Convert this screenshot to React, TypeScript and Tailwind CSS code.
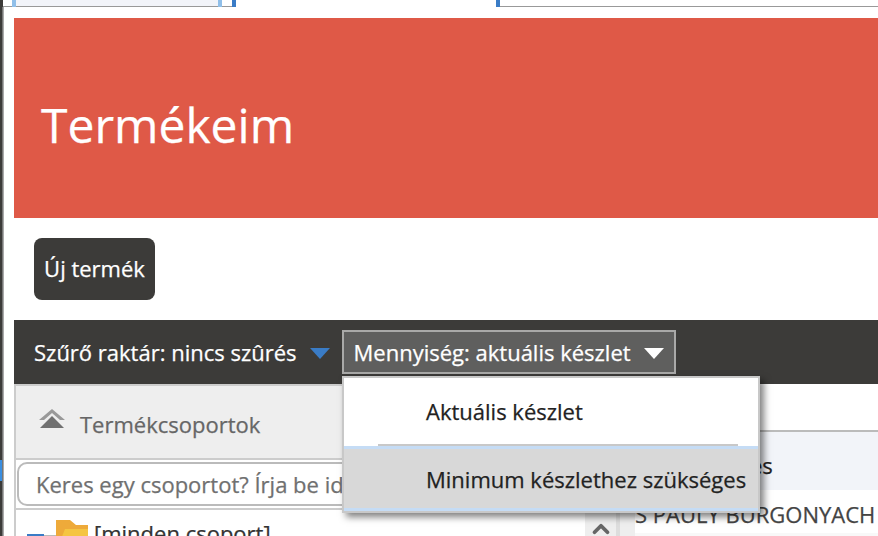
import { ChevronUp } from 'lucide-react'

const font = { fontFamily: '"Open Sans", sans-serif' }

function TopStrip() {
  return (
    <div className="flex h-[7px] shrink-0">
      <div className="w-[3px] bg-[#3c3b39]" />
      <div className="w-[9px] border-b border-[#999]" />
      <div className="w-[4px] bg-[#90bfe9]" />
      <div className="w-[202px] bg-[#f2f4f9] border-b border-[#999]" />
      <div className="w-[4px] bg-[#90bfe9]" />
      <div className="w-[10px] border-b border-[#999]" />
      <div className="w-[4px] bg-[#3a7cc6]" />
      <div className="w-[260px]" />
      <div className="w-[4px] bg-[#3a7cc6]" />
      <div className="flex-1 border-b border-[#999]" />
    </div>
  )
}

function LeftStrip() {
  return (
    <div className="flex w-[4px] shrink-0 border-r border-[#aaa]">
      <div className="w-[2px] bg-[#3c3b39]">
        <div className="mt-[453px] h-[21px] bg-[#3a8ee0]" />
      </div>
      <div className="w-px bg-[#777]" />
    </div>
  )
}

function Dropdown() {
  return (
    <div className="absolute left-[328px] top-[56px] z-10 w-[418px] border-2 border-[#c8c8c8] bg-white shadow-[4px_4px_7px_rgba(0,0,0,0.5)]">
      <div className="relative h-[71px] border-b-[3px] border-[#c5dcf5] pl-[82px] pt-[18px] text-[22px] leading-[30px] text-[#222]">
        Aktuális készlet
        <div className="absolute bottom-0 left-[34px] right-[20px] h-[2px] bg-[#c8c8c8]" />
      </div>
      <div className="h-[62px] border-b-[3px] border-[#c5dcf5] bg-[#d8d8d8] pl-[82px] pt-[15px] text-[22px] leading-[30px] text-[#222] whitespace-nowrap">
        Minimum készlethez szükséges
      </div>
    </div>
  )
}

function FilterBar() {
  return (
    <div className="relative flex h-[64px] shrink-0 items-center bg-[#3c3b39] pl-[20px] text-[22px] text-white">
      <span>Szűrő raktár: nincs szûrés</span>
      <svg width="20" height="12" viewBox="0 0 20 12" className="ml-[13px] mt-[3px]">
        <path d="M0 0H20L10 11Z" fill="#3a7cc6" />
      </svg>
      <div className="ml-[12px] flex h-[44px] w-[334px] items-center border-2 border-[#a9a9a8] bg-[#5f5f5e] pl-[10px]">
        <span>Mennyiség: aktuális készlet</span>
        <svg width="20" height="12" viewBox="0 0 20 12" className="ml-[13px] mt-[3px]">
          <path d="M0 0H20L10 11Z" fill="#fff" />
        </svg>
      </div>
      <Dropdown />
    </div>
  )
}

function GroupsPanel() {
  return (
    <div className="flex w-[621px] shrink-0 flex-col border-l-2 border-[#ccc]">
      <div className="flex h-[76px] shrink-0 items-center border-y-2 border-[#ccc] bg-[#eee] pl-[22px] pt-[4px] text-[22px] text-[#666]">
        <svg width="28" height="24" viewBox="0 0 28 24" className="mb-[8px]">
          <path d="M14 1L27 12H22L14 5L6 12H1Z" fill="#999" />
          <path d="M14 8L26 20H2Z" fill="#707070" />
        </svg>
        <span className="ml-[14px]">Termékcsoportok</span>
      </div>
      <div className="flex h-[50px] shrink-0 items-center border-b-2 border-[#ccc] pl-[1px]">
        <div className="flex h-[44px] w-full items-center rounded-[10px] border-2 border-[#bbb] pl-[17px] text-[22px] text-[#707070] whitespace-nowrap">
          Keres egy csoportot? Írja be ide...
        </div>
      </div>
      <div className="flex flex-1">
        <div className="flex flex-1 pl-[11px] pt-[10px]">
          <div className="mt-[14px] h-[8px] w-[17px] bg-[#3a7cc6]" />
          <div className="mt-[15px] h-px w-[12px] bg-[#bbb]" />
          <svg width="32" height="32" viewBox="0 0 32 32" className="shrink-0">
            <path d="M0 0H14L20 5H32V32H0Z" fill="#eeaa3a" />
            <path d="M9 9H32V32H0Z" fill="#f5c542" />
          </svg>
          <span className="ml-[6px] text-[22px] leading-[26px] text-[#333]">[minden csoport]</span>
        </div>
        <div className="flex w-[31px] shrink-0 justify-center bg-[#eee] pt-[6px]">
          <ChevronUp size={26} strokeWidth={3.5} color="#666" />
        </div>
        <div className="w-[4px] shrink-0 bg-[#ddd]" />
        <div className="w-[15px] shrink-0 bg-[#eee]" />
      </div>
    </div>
  )
}

function ProductsPanel() {
  return (
    <div className="flex flex-1 flex-col">
      <div className="h-[48px] shrink-0 border-b-2 border-[#bbb]" />
      <div className="flex h-[58px] shrink-0 items-center bg-[#f2f4f9] pl-[115px] pt-[8px] text-[22px] text-[#222]">es</div>
      <div className="h-[43px] shrink-0 whitespace-nowrap pt-[9px] text-[22px] leading-[30px] text-[#444]">S PAULY BURGONYACH</div>
      <div className="flex-1 bg-[#f8f8f8]" />
    </div>
  )
}

export default function App() {
  return (
    <div className="flex h-[536px] w-[878px] flex-col overflow-hidden bg-white [-webkit-text-stroke:0.25px]" style={font}>
      <TopStrip />
      <div className="flex flex-1 overflow-hidden">
        <LeftStrip />
        <div className="flex min-w-0 flex-1 flex-col pl-[10px] pt-[11px]">
          <div className="flex h-[200px] shrink-0 items-center bg-[#df5947] pl-[27px] pt-[14px] text-[48px] text-white">
            Termékeim
          </div>
          <div className="flex h-[102px] shrink-0 items-center pl-[20px]">
            <div className="flex h-[62px] w-[121px] items-center justify-center rounded-[8px] bg-[#3c3b39] pb-[2px] text-[22px] text-white">
              Új termék
            </div>
          </div>
          <FilterBar />
          <div className="flex flex-1">
            <GroupsPanel />
            <ProductsPanel />
          </div>
        </div>
      </div>
    </div>
  )
}
